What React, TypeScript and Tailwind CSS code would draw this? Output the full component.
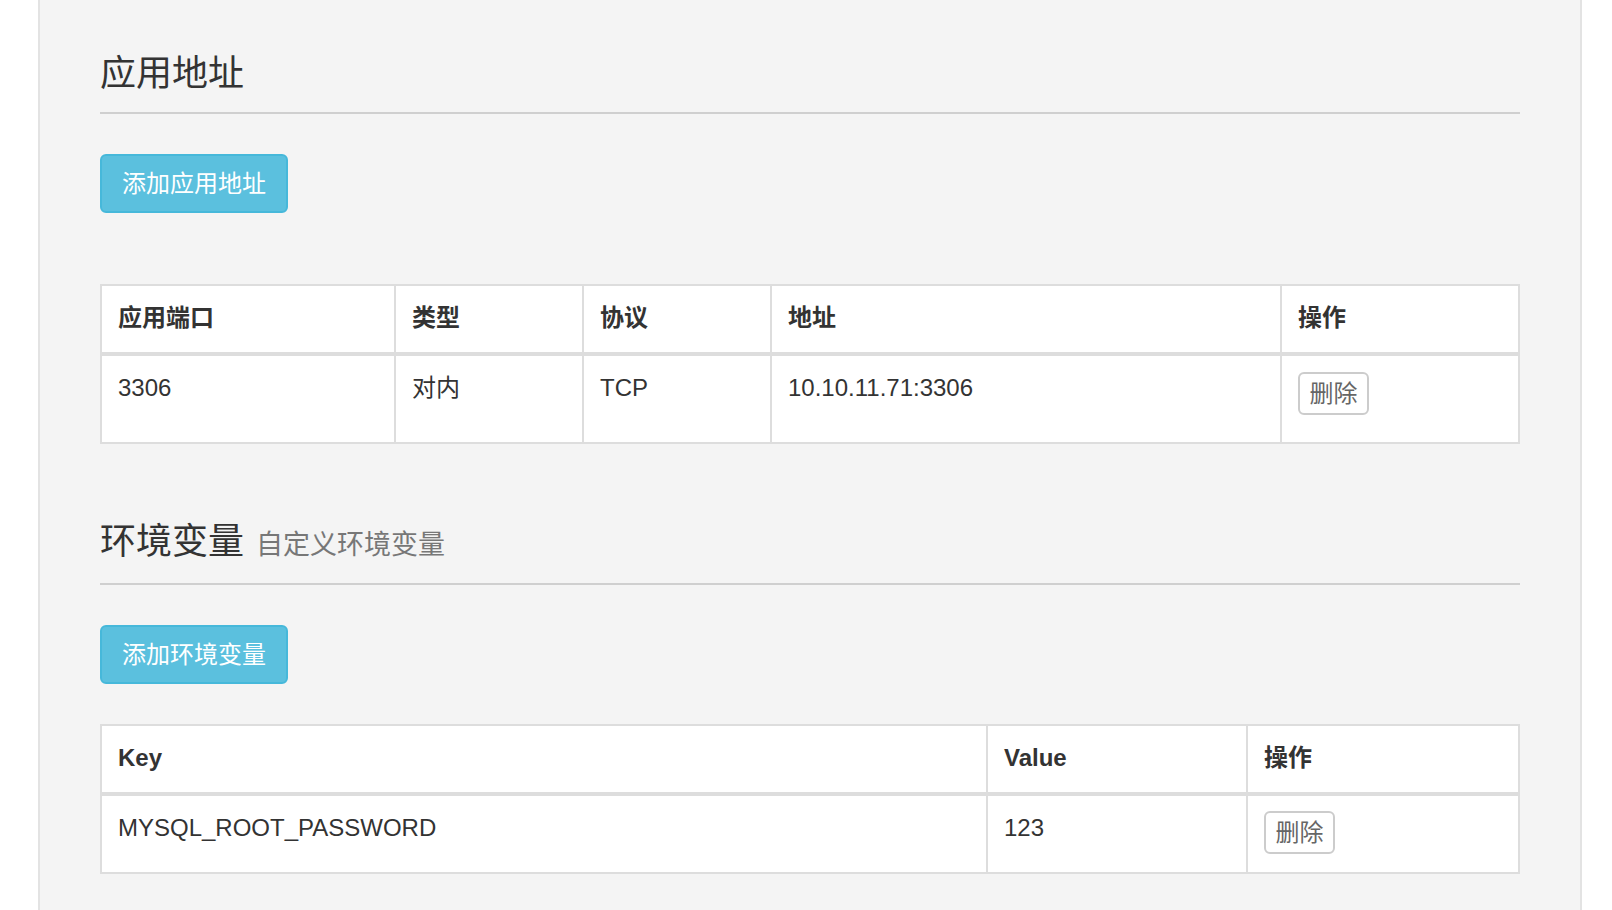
import React from 'react';

interface PortRow {
    port: string;
    type: string;
    protocol: string;
    address: string;
}

interface EnvRow {
    key: string;
    value: string;
}

const ports: PortRow[] = [
    { port: '3306', type: '对内', protocol: 'TCP', address: '10.10.11.71:3306' },
];

const envs: EnvRow[] = [
    { key: 'MYSQL_ROOT_PASSWORD', value: '123' },
];

const headCell = 'h-[66px] px-4 pt-[15px] text-[24px] leading-[34px] font-bold text-[#333]';
const bodyCell = 'px-4 pt-[15px] text-[24px] leading-[34px] text-[#333]';

const DeleteButton: React.FC = () => (
    <button
        type="button"
        className="flex h-[43px] w-[71px] items-center justify-center rounded-[6px] border-2 border-[#cccccc] bg-white text-[24px] leading-[30px] text-[#666]"
    >
        删除
    </button>
);

const AddButton: React.FC<{ label: string }> = ({ label }) => (
    <button
        type="button"
        className="flex h-[59px] w-[188px] items-center justify-center rounded-[6px] border-2 border-[#46b8da] bg-[#5bc0de] text-[24px] leading-[34px] text-white"
    >
        {label}
    </button>
);

const App: React.FC = () => {
    return (
        <div
            className="min-h-screen bg-white"
            style={{ fontFamily: '"Liberation Sans", "Noto Sans CJK SC", sans-serif' }}
        >
            <div className="ml-[38px] min-h-[910px] w-[1544px] border-x-2 border-[#e3e3e3] bg-[#f4f4f4] px-[60px] pt-[54px]">
                {/* 应用地址 */}
                <div className="border-b-2 border-[#cfcfcf] pb-[18px]">
                    <h1 className="text-[36px] leading-[40px] font-normal text-[#333]">应用地址</h1>
                </div>

                <div className="mt-[40px]">
                    <AddButton label="添加应用地址" />
                </div>

                <div className="mt-[71px] w-[1420px] border-2 border-[#dddddd] bg-white">
                    <div className="grid grid-cols-[292px_188px_188px_510px_238px] border-b-4 border-[#dddddd]">
                        <div className={headCell}>应用端口</div>
                        <div className={`${headCell} border-l-2 border-[#dddddd]`}>类型</div>
                        <div className={`${headCell} border-l-2 border-[#dddddd]`}>协议</div>
                        <div className={`${headCell} border-l-2 border-[#dddddd]`}>地址</div>
                        <div className={`${headCell} border-l-2 border-[#dddddd]`}>操作</div>
                    </div>
                    {ports.map((row, i) => (
                        <div key={i} className="grid h-[86px] grid-cols-[292px_188px_188px_510px_238px]">
                            <div className={bodyCell}>{row.port}</div>
                            <div className={`${bodyCell} border-l-2 border-[#dddddd]`}>{row.type}</div>
                            <div className={`${bodyCell} border-l-2 border-[#dddddd]`}>{row.protocol}</div>
                            <div className={`${bodyCell} border-l-2 border-[#dddddd]`}>{row.address}</div>
                            <div className="border-l-2 border-[#dddddd] px-4 pt-[16px]">
                                <DeleteButton />
                            </div>
                        </div>
                    ))}
                </div>

                {/* 环境变量 */}
                <div className="mt-[78px] flex items-baseline border-b-2 border-[#cfcfcf] pb-[18px]">
                    <h1 className="text-[36px] leading-[40px] font-normal text-[#333]">环境变量</h1>
                    <small className="ml-[12px] text-[27px] leading-[40px] text-[#777]">自定义环境变量</small>
                </div>

                <div className="mt-[40px]">
                    <AddButton label="添加环境变量" />
                </div>

                <div className="mt-[40px] w-[1420px] border-2 border-[#dddddd] bg-white">
                    <div className="grid grid-cols-[884px_260px_272px] border-b-4 border-[#dddddd]">
                        <div className={headCell}>Key</div>
                        <div className={`${headCell} border-l-2 border-[#dddddd]`}>Value</div>
                        <div className={`${headCell} border-l-2 border-[#dddddd]`}>操作</div>
                    </div>
                    {envs.map((row, i) => (
                        <div key={i} className="grid h-[76px] grid-cols-[884px_260px_272px]">
                            <div className={bodyCell}>{row.key}</div>
                            <div className={`${bodyCell} border-l-2 border-[#dddddd]`}>{row.value}</div>
                            <div className="border-l-2 border-[#dddddd] px-4 pt-[15px]">
                                <DeleteButton />
                            </div>
                        </div>
                    ))}
                </div>
            </div>
        </div>
    );
};

export default App;
